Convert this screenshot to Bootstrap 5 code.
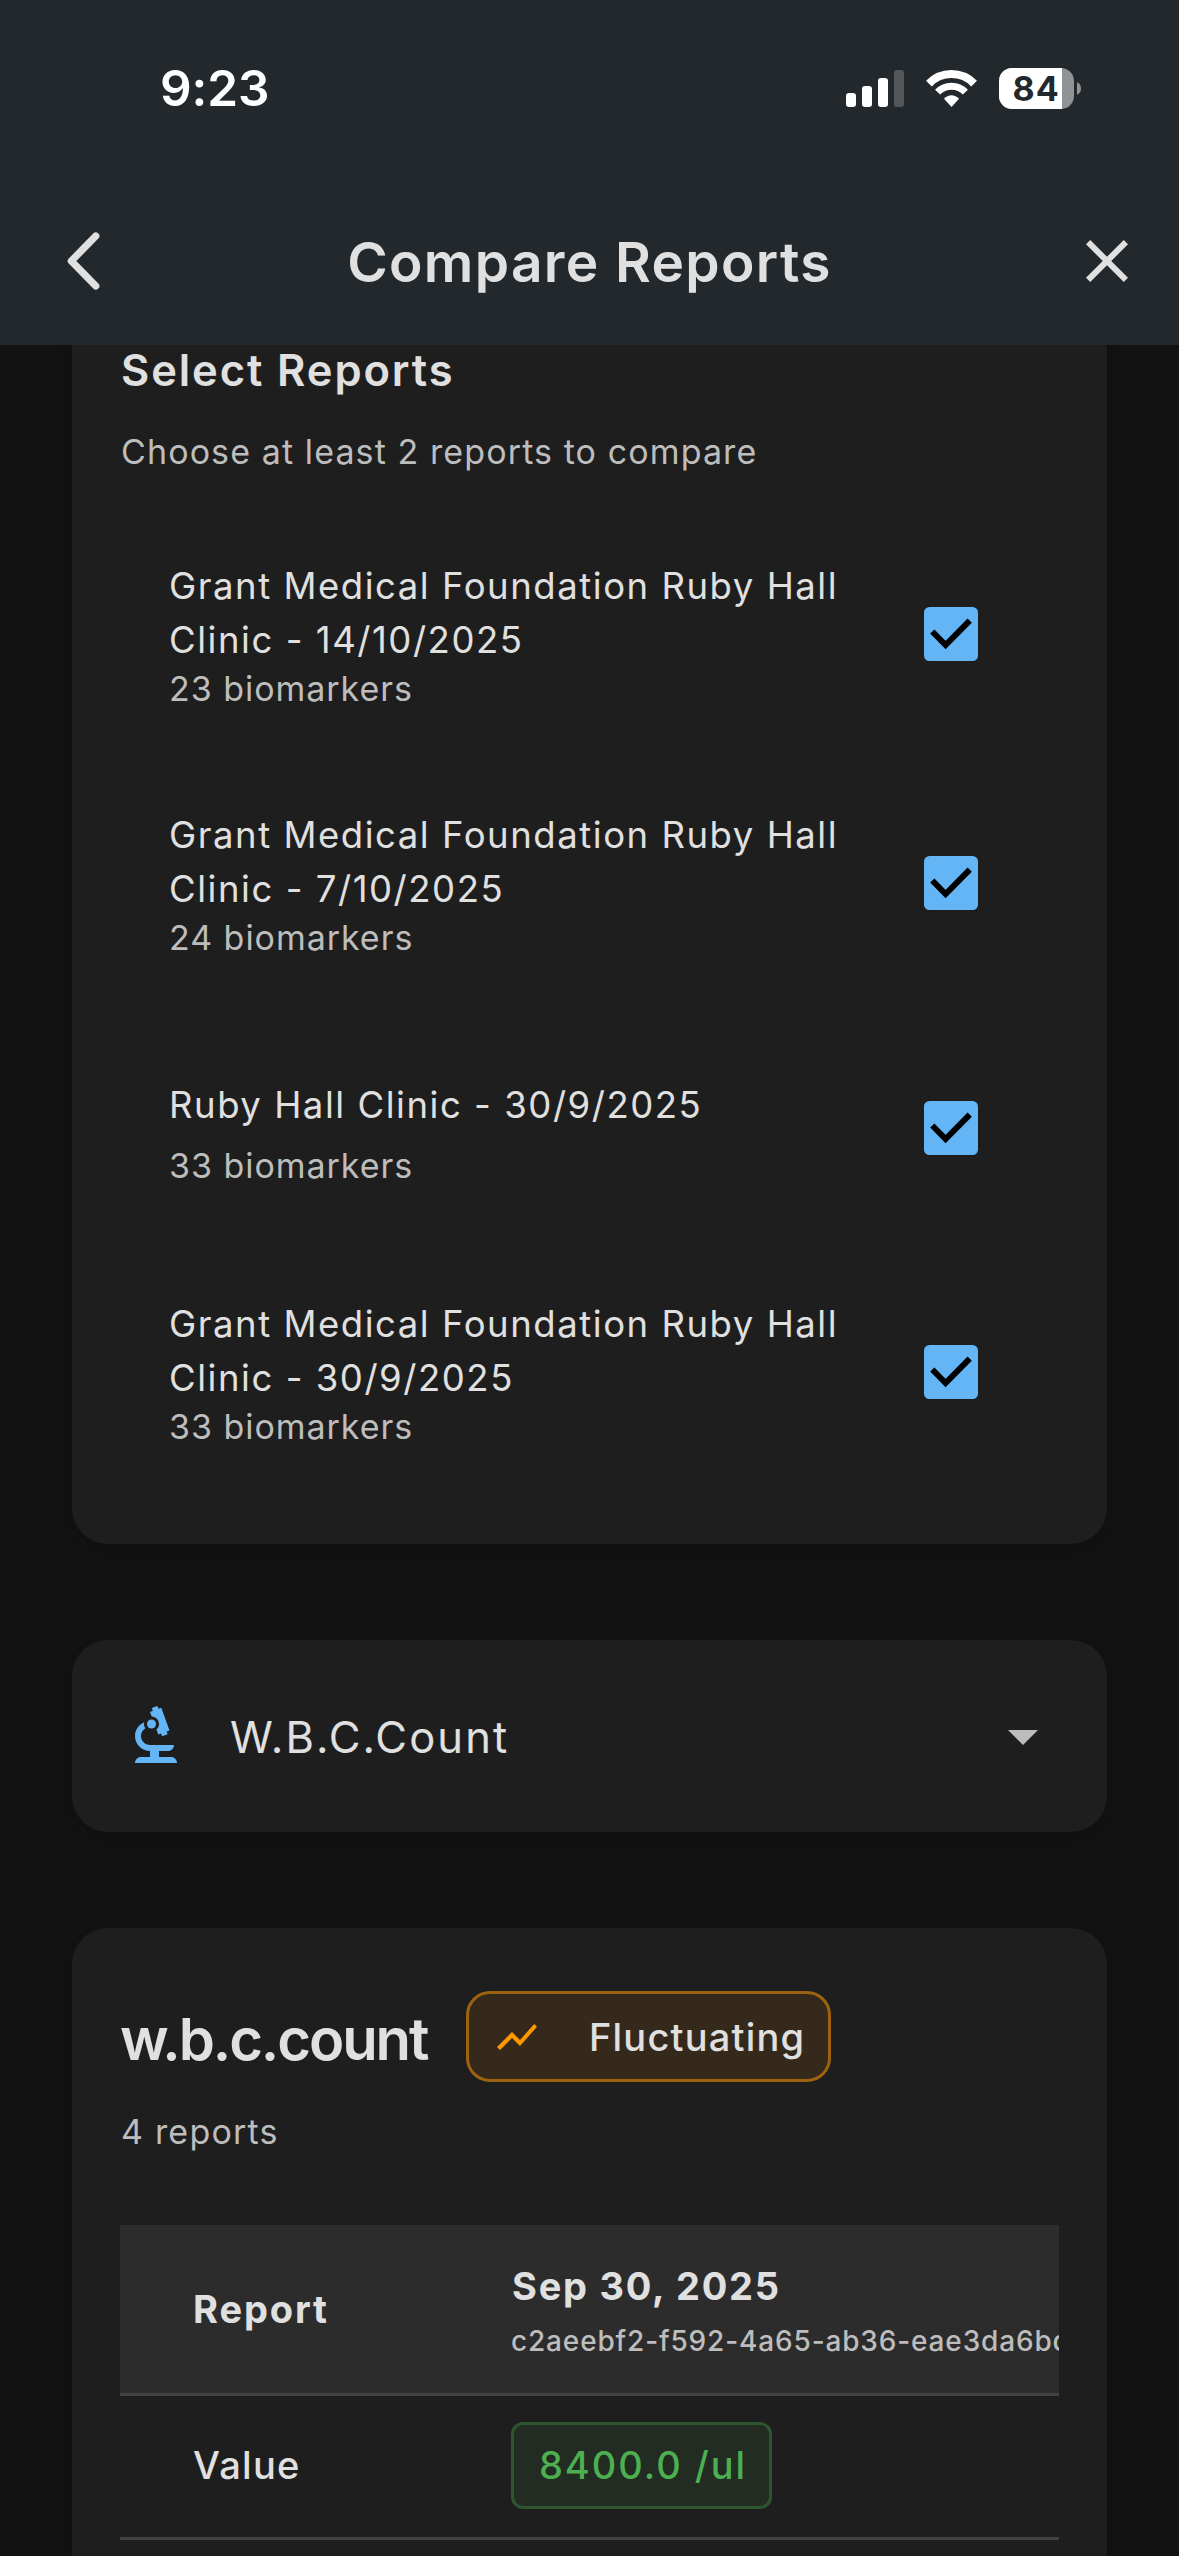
<!DOCTYPE html>
<html lang="en" data-bs-theme="dark">
<head>
<meta charset="utf-8">
<meta name="viewport" content="width=device-width, initial-scale=1">
<title>Compare Reports</title>
<link href="https://cdn.jsdelivr.net/npm/bootstrap@5.3.0/dist/css/bootstrap.min.css" rel="stylesheet">
<style>
  html { font-size: 16px; }
  body {
    background: #121212; color: #e0e0e0; height: 2556px; overflow: hidden;
    font-family: Inter, "Liberation Sans", sans-serif;
  }
  svg { display: block; flex: none; }
  .app-header { background: #23282c; height: 345px; z-index: 2; }
  .status-row { height: 177px; padding: 0 98px 1px 160px; gap: 22px; color: #fff; }
  .status-time { font-size: 49.5px; font-weight: 600; letter-spacing: -.1px; line-height: 60px; }
  .nav-row { height: 168px; padding: 0 36px 0 47px; }
  .nav-title { font-size: 55px; font-weight: 600; letter-spacing: 1.35px; line-height: 66px; padding-top: 1px; margin-right: 11px; }
  .nav-side { width: 72px; }

  .page { padding: 0 72px; }
  .panel { background: #1e1e1e; color: #e0e0e0; border: 0; border-radius: 36px; box-shadow: 0 6px 12px rgba(0,0,0,.1); }
  .panel-select { margin-top: -49px; height: 1248px; padding: 48px; }
  .panel-title { font-size: 43.5px; font-weight: 600; letter-spacing: 1.9px; line-height: 52px; margin: 0; padding-left: 1px; color: #e0e0e0; }
  .muted-line { font-size: 34px; letter-spacing: 1.1px; line-height: 48px; color: #bdbdbd; margin: 0; padding-left: 1px; }
  .panel-select .muted-line { margin-top: 32px; }
  .report-list { margin-top: 33.5px; }
  .report-row { height: 248.75px; padding: 0 81px 0 49px; }
  .report-row.single { height: 241px; }
  .report-row:last-child { height: 248px; }
  .report-text { width: 707px; padding-top: 1px; }
  .single .report-text { padding-top: 9px; }
  .report-name { font-size: 36.5px; letter-spacing: 1.54px; line-height: 54px; }
  .report-count { font-size: 34px; letter-spacing: .96px; line-height: 43px; color: #bdbdbd; }
  .single .report-count { margin-top: 12px; }

  .panel-picker { margin-top: 96px; height: 192px; padding: 0 48px; }
  .picker-label { font-size: 43.5px; letter-spacing: 2.1px; line-height: 54px; margin-left: 38px; padding-top: 2px; }

  .panel-result { margin-top: 96px; height: 628px; padding: 63px 48px 0; border-radius: 36px 36px 0 0; }
  .marker-name { font-size: 58px; font-weight: 600; letter-spacing: -2.1px; line-height: 72px; min-width: 346px; margin: 0; padding-top: 4px; white-space: nowrap; color: #e0e0e0; }
  .trend-chip { width: 365px; height: 91px; border: 3px solid #9c620f; border-radius: 24px; background: #35291c; padding-left: 24px; gap: 48px; font-size: 38px; font-weight: 500; letter-spacing: 1.2px; line-height: 48px; }
  .panel-result .muted-line { margin-top: 26px; letter-spacing: 1.2px; }

  .compare-wrap { margin-top: 69px; overflow: hidden; }
  .compare-table { width: 1500px; table-layout: fixed; border-collapse: separate; border-spacing: 0; margin: 0; color: #e0e0e0; }
  .compare-table > :not(caption) > * > * { border-bottom: 3px solid #424242; padding: 0; vertical-align: middle; background: transparent; box-shadow: none; color: inherit; font-size: 38px; line-height: 54px; }
  .compare-table > thead > tr > th { background: #2c2c2c; height: 171px; font-weight: 650; }
  .compare-table > tbody > tr > td { height: 144px; font-weight: 500; padding-bottom: 2px; }
  .compare-table > :not(caption) > tr > :first-child { width: 391px; padding-left: 73px; }
  .compare-table .key-head { letter-spacing: 1.9px; }
  .compare-table .key-cell { letter-spacing: 1.3px; padding-bottom: 4px; }
  .date-line { letter-spacing: 1.75px; padding: 7px 0 0 1px; }
  .id-line { font-size: 28px; font-weight: 500; letter-spacing: .85px; line-height: 50px; margin-top: 3px; color: #bdbdbd; white-space: nowrap; }
  .value-chip { width: 261px; height: 87px; border: 3px solid #2d5630; border-radius: 12px; background: #232c23; color: #4caf50; padding: 0 0 2px 25px; letter-spacing: 1.95px; }
</style>
<script src="https://cdn.jsdelivr.net/npm/bootstrap@5.3.0/dist/js/bootstrap.bundle.min.js"></script>
</head>
<body>

<svg width="0" height="0" class="position-absolute">
  <symbol id="tick" viewBox="0 0 54 54">
    <rect width="54" height="54" rx="5.5" fill="#64b5f6"/>
    <path d="M8.3 24.5 21.6 38 45.7 13.6" fill="none" stroke="#000" stroke-width="6"/>
  </symbol>
</svg>

<header class="app-header position-relative">
  <div class="status-row d-flex align-items-center">
    <div class="status-time me-auto">9:23</div>
    <svg width="58" height="37" viewBox="0 0 58 37" fill="#fff">
      <rect x="0" y="23" width="10" height="14" rx="3"/>
      <rect x="16" y="16" width="10" height="21" rx="3"/>
      <rect x="32" y="8" width="10" height="29" rx="3"/>
      <rect x="48" y="0" width="10" height="37" rx="3" opacity=".22"/>
    </svg>
    <svg width="51" height="37" viewBox="0 0 51 37">
      <g fill="none" stroke="#fff">
        <path stroke-width="8" d="M2.9 13.6A31.5 31.5 0 0 1 48.1 13.6"/>
        <path stroke-width="7" d="M11.6 22.1A19.3 19.3 0 0 1 39.4 22.1"/>
      </g>
      <path fill="#fff" d="M18 28.8Q21.3 25.3 25.5 25.3T33 28.8L25.5 37Z"/>
    </svg>
    <svg width="82" height="41" viewBox="0 0 82 41">
      <clipPath id="cell"><rect width="75" height="41" rx="13"/></clipPath>
      <g clip-path="url(#cell)"><rect width="75" height="41" fill="#8f9395"/><rect width="63" height="41" fill="#fff"/></g>
      <path d="M78 14.3Q82 16 82 20.5T78 26.7Z" fill="#8f9395"/>
      <text x="13.5" y="33" font-size="34" font-weight="700" letter-spacing="1.2" fill="#23282c">84</text>
    </svg>
  </div>
  <div class="nav-row d-flex align-items-center justify-content-between">
    <div class="nav-side">
      <svg width="72" height="72" viewBox="0 0 72 72"><path d="M48.8 11 24.3 36 48.8 61" fill="none" stroke="#e0e0e0" stroke-width="7.2" stroke-linecap="round" stroke-linejoin="round"/></svg>
    </div>
    <div class="nav-title">Compare Reports</div>
    <div class="nav-side">
      <svg width="72" height="72" viewBox="0 0 24 24" fill="#e0e0e0"><path d="M19 6.41 17.59 5 12 10.59 6.41 5 5 6.41 10.59 12 5 17.59 6.41 19 12 13.41 17.59 19 19 17.59 13.41 12z"/></svg>
    </div>
  </div>
</header>

<main class="page">
  <section class="card panel panel-select">
    <h2 class="panel-title">Select Reports</h2>
    <p class="muted-line">Choose at least 2 reports to compare</p>
    <div class="report-list">
      <div class="report-row d-flex align-items-center justify-content-between">
        <div class="report-text"><div class="report-name">Grant Medical Foundation Ruby Hall Clinic - 14/10/2025</div><div class="report-count">23 biomarkers</div></div>
        <svg width="54" height="54"><use href="#tick"/></svg>
      </div>
      <div class="report-row d-flex align-items-center justify-content-between">
        <div class="report-text"><div class="report-name">Grant Medical Foundation Ruby Hall Clinic - 7/10/2025</div><div class="report-count">24 biomarkers</div></div>
        <svg width="54" height="54"><use href="#tick"/></svg>
      </div>
      <div class="report-row single d-flex align-items-center justify-content-between">
        <div class="report-text"><div class="report-name">Ruby Hall Clinic - 30/9/2025</div><div class="report-count">33 biomarkers</div></div>
        <svg width="54" height="54"><use href="#tick"/></svg>
      </div>
      <div class="report-row d-flex align-items-center justify-content-between">
        <div class="report-text"><div class="report-name">Grant Medical Foundation Ruby Hall Clinic - 30/9/2025</div><div class="report-count">33 biomarkers</div></div>
        <svg width="54" height="54"><use href="#tick"/></svg>
      </div>
    </div>
  </section>

  <section class="card panel panel-picker flex-row align-items-center">
    <svg width="72" height="72" viewBox="0 0 24 24" fill="#64b5f6">
      <path d="M7 19c-1.1 0-2 .9-2 2h14c0-1.1-.9-2-2-2h-4v-2h3c1.1 0 2-.9 2-2h-8c-1.66 0-3-1.34-3-3 0-1.09.59-2.04 1.46-2.56C8.17 9.03 8 8.54 8 8c0-.21.04-.42.09-.62C6.28 8.13 5 9.92 5 12c0 2.76 2.24 5 5 5v2H7z"/>
      <path d="M10.56 5.51C11.91 5.54 13 6.64 13 8c0 .75-.33 1.41-.85 1.87l.59 1.62.94-.34.34.94 1.88-.68-.34-.94.94-.34L13.76 2.6l-.94.34L12.48 2l-1.88.68.34.94-.94.35.56 1.54z"/>
      <circle cx="10.5" cy="8" r="1.5"/>
    </svg>
    <div class="picker-label me-auto">W.B.C.Count</div>
    <svg width="72" height="72" viewBox="0 0 24 24" fill="#bdbdbd"><path d="M7 10l5 5 5-5z"/></svg>
  </section>

  <section class="card panel panel-result">
    <div class="d-flex align-items-center">
      <h1 class="marker-name">w.b.c.count</h1>
      <div class="trend-chip d-flex align-items-center">
        <svg width="48" height="48" viewBox="0 0 24 24" fill="#ff9800"><path d="M3.5 18.49l6-6.01 4 4L22 6.92l-1.41-1.41-7.09 7.97-4-4L2 16.99z"/></svg>
        <span>Fluctuating</span>
      </div>
    </div>
    <p class="muted-line">4 reports</p>
    <div class="compare-wrap">
      <table class="table compare-table">
        <thead>
          <tr>
            <th class="key-head">Report</th>
            <th><div class="date-line">Sep 30, 2025</div><div class="id-line">c2aeebf2-f592-4a65-ab36-eae3da6bd</div></th>
          </tr>
        </thead>
        <tbody>
          <tr>
            <td class="key-cell">Value</td>
            <td><div class="value-chip d-flex align-items-center">8400.0 /ul</div></td>
          </tr>
        </tbody>
      </table>
    </div>
  </section>
</main>
</body>
</html>
